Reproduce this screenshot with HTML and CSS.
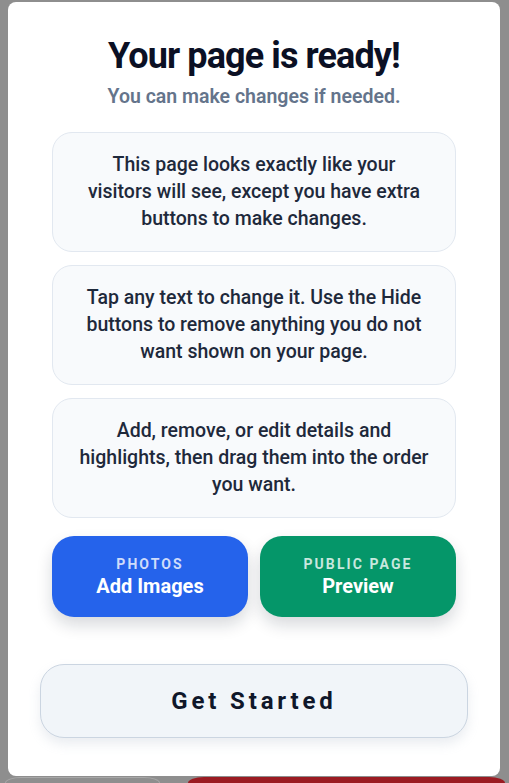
FILE: index.html
```html
<!DOCTYPE html>
<html lang="en">
<head>
<meta charset="utf-8">
<title>Your page is ready</title>
<link rel="stylesheet" href="styles.css">
</head>
<body>
  <div class="modal">
    <h1 class="title">Your page is ready!</h1>
    <p class="subtitle">You can make changes if needed.</p>
    <div class="cards">
      <div class="card">This page looks exactly like your<br>visitors will see, except you have extra<br>buttons to make changes.</div>
      <div class="card">Tap any text to change it. Use the Hide<br>buttons to remove anything you do not<br>want shown on your page.</div>
      <div class="card">Add, remove, or edit details and<br>highlights, then drag them into the order<br>you want.</div>
    </div>
    <div class="actions">
      <button class="action action-blue">
        <span class="action-label">PHOTOS</span>
        <span class="action-main">Add Images</span>
      </button>
      <button class="action action-green">
        <span class="action-label">PUBLIC PAGE</span>
        <span class="action-main">Preview</span>
      </button>
    </div>
    <button class="primary">Get Started</button>
  </div>
  <div class="footer">
    <div class="footer-ghost"></div>
    <div class="footer-red"></div>
  </div>
</body>
</html>
```

FILE: styles.css
```css
html, body {
  margin: 0;
  padding: 0;
}
body {
  height: 100vh;
  overflow: hidden;
  background: #8e8e8e;
  font-family: Roboto, "Noto Sans", "Liberation Sans", sans-serif;
  display: flex;
  flex-direction: column;
}
.modal {
  margin: 2px 9px 0 8px;
  height: 774px;
  flex: none;
  box-sizing: border-box;
  background: #ffffff;
  border-radius: 8px;
  padding: 34px 32px 38px;
  display: flex;
  flex-direction: column;
}
.title {
  margin: 0;
  text-align: center;
  font-size: 36px;
  line-height: 40px;
  font-weight: 700;
  letter-spacing: -0.025em;
  color: #0b1024;
}
.subtitle {
  margin: 8px 0 0;
  text-align: center;
  font-size: 19.5px;
  line-height: 26px;
  font-weight: 600;
  color: #64748b;
}
.cards {
  margin: 22px 12px 0;
  display: flex;
  flex-direction: column;
  gap: 13px;
}
.card {
  background: #f8fafc;
  border: 1px solid #e2e8f0;
  border-radius: 20px;
  padding: 18px 8px 19px;
  text-align: center;
  white-space: nowrap;
  font-size: 19.5px;
  line-height: 27px;
  font-weight: 500;
  color: #1e293b;
}
.actions {
  margin: 18px 12px 0;
  display: grid;
  grid-template-columns: 1fr 1fr;
  gap: 12px;
}
.action {
  height: 81px;
  border: none;
  border-radius: 22px;
  display: flex;
  flex-direction: column;
  align-items: center;
  justify-content: center;
  font-family: inherit;
  color: #ffffff;
  box-shadow: 0 8px 16px rgba(15, 23, 42, 0.16);
  padding: 0;
}
.action-blue {
  background: #2563eb;
}
.action-green {
  background: #059669;
}
.action-label {
  font-size: 14px;
  line-height: 18px;
  font-weight: 700;
  letter-spacing: 0.15em;
  color: rgba(255, 255, 255, 0.78);
}
.action-main {
  font-size: 20px;
  line-height: 26px;
  font-weight: 700;
  color: #ffffff;
}
.primary {
  margin-top: 47px;
  height: 74px;
  border: 1px solid #cbd5e1;
  border-radius: 24px;
  background: #f1f5f9;
  font-family: inherit;
  font-size: 24px;
  font-weight: 700;
  letter-spacing: 0.16em;
  color: #0f172a;
  box-shadow: 0 6px 12px rgba(148, 163, 184, 0.2);
}
.footer {
  flex: 1;
  min-height: 0;
  display: flex;
  gap: 28px;
  margin-top: 1px;
  padding: 0 4px 0 5px;
}
.footer-ghost {
  width: 155px;
  height: 100%;
  border: 1px solid #a8a8a8;
  border-bottom: none;
  border-radius: 16px 16px 0 0 / 6px 6px 0 0;
  box-sizing: border-box;
}
.footer-red {
  flex: 1;
  height: 100%;
  background: #9b1b22;
  border-radius: 16px 16px 0 0 / 6px 6px 0 0;
}
```
